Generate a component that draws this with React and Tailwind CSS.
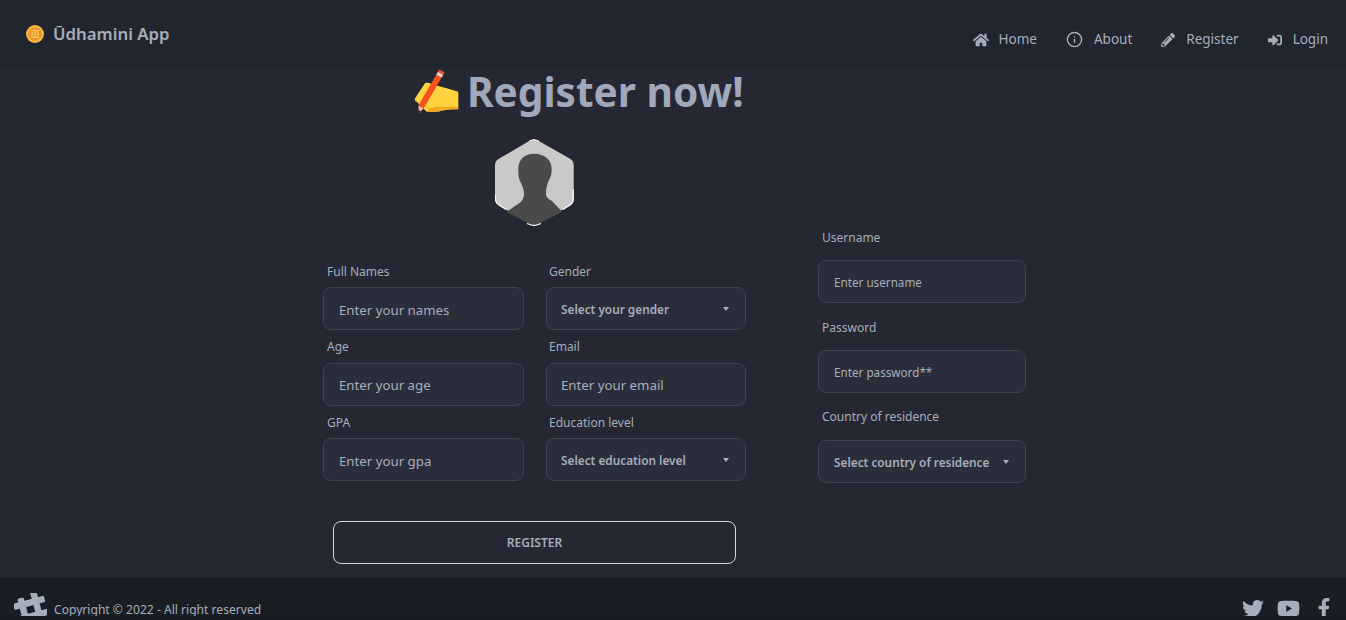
import { FaHome, FaPencilAlt, FaSignInAlt, FaTwitter, FaYoutube, FaFacebookF } from "react-icons/fa";
import { FiInfo } from "react-icons/fi";

const font = "font-['Noto_Sans','Open_Sans',sans-serif]";

function Coin() {
    return (
        <svg width="20" height="20" viewBox="0 0 20 20">
            <circle cx="10" cy="10" r="9" fill="#f6b93b" />
            <circle cx="10" cy="10" r="6.8" fill="#e8952e" />
            <path d="M6 6h8v1.2H6zM6.5 8h1.3v4.5H6.5zM9.3 8h1.4v4.5H9.3zM12.2 8h1.3v4.5h-1.3zM6 12.8h8V14H6z" fill="#f8c65a" />
        </svg>
    );
}

function WritingHand() {
    return (
        <svg width="46" height="44" viewBox="0 0 46 44">
            <path d="M1 29.3 L11 14.3 C12 13.4 14 13.6 21 16 L32.7 19.3 L44.3 22.7 L44.3 39 L21 42.7 L12.7 42.7 L7.7 37.7 L3 33 C1 32 0.4 30.6 1 29.3Z" fill="#ffd33d" />
            <path d="M21 37.7 L44.3 37.7 L44.3 40.5 L26 40.5 L25.5 42.7 L15 42.7 L14 39 L19 39Z" fill="#f6a623" />
            <path d="M4.4 36.5 L25.4 0.5 L30.6 3.5 L9.6 39.5Z" fill="#f4511e" />
            <path d="M23.9 3 L29.1 6 L27.6 8.5 L22.4 5.5Z" fill="#d9d9d9" />
            <path d="M4.4 36.5 L9.6 39.5 L5 44Z" fill="#f5b7a8" />
            <path d="M4.6 41 L6.6 42.2 L4.6 44Z" fill="#222" />
        </svg>
    );
}

function Avatar() {
    return (
        <svg width="79" height="87" viewBox="0 0 79 87">
            <path d="M35.5 1.2 Q39 -0.6 42.5 1.2 L75.5 20 Q78.7 22 78.7 26 L78.7 60 Q78.7 64 75.5 66 L42.5 85.2 Q39 87 35.5 85.2 L3.5 66 Q0 64 0 60 L0 26 Q0 22 3.5 20Z" fill="#c9c9c9" />
            <path d="M39 14.7 C50 14.7 56.7 21 56.7 30 C56.7 36 55 39 53.5 42 C52 46 51 50 51 54 C51 58 53 60 57 62 L67.3 73 L42.5 85.2 Q39 87 35.5 85.2 L11.7 73 L20 67 C26 64 29 60 29 55 C29 50 27 46 25 42 C23.5 39 23.3 35 23.3 30 C23.3 21 29 14.7 39 14.7Z" fill="#4a4a4a" />
            <path d="M0.5 56 L0.5 60 Q0.5 64 4 66 L11 70.5 M78.2 50 L78.2 60 Q78.2 64 75 66 L68 70.5 M32 84.5 L35.5 85.8 Q39 87 42.5 85.8 L46 84.5" fill="none" stroke="#fff" strokeWidth="1.2" />
            <path d="M34 2 Q39 -0.6 44 2" fill="none" stroke="#e8e8e8" strokeWidth="1" />
        </svg>
    );
}

function PuzzleLogo() {
    return (
        <svg width="33" height="30" viewBox="0 0 33 30">
            <g fill="#a6adbb" transform="rotate(-15 16 15)">
                <rect x="6" y="3" width="6.5" height="27" rx="1.5" />
                <rect x="20" y="-1" width="6.5" height="31" rx="1.5" />
                <rect x="0.5" y="6.5" width="32" height="6.5" rx="1.5" />
                <rect x="0.5" y="20" width="32" height="6.5" rx="1.5" />
            </g>
        </svg>
    );
}

function Caret() {
    return <span className="absolute right-[16px] top-1/2 -translate-y-1/2 w-0 h-0 border-x-[3.5px] border-x-transparent border-t-[4px] border-t-[#a6adbb]"></span>;
}

function Label({ text, className }) {
    return <label className={`h-[32.5px] shrink-0 flex items-center text-[12px] text-[#a6adbb] ${className}`}>{text}</label>;
}

function TextField({ label, placeholder, labelClass = "pl-1 pt-[2px]", inputClass = "pl-[15px] pt-[2px] text-[13.25px]" }) {
    return (
        <div className="flex flex-col">
            <Label text={label} className={labelClass} />
            <input
                placeholder={placeholder}
                className={`h-[43px] w-full rounded-lg border border-[#3e4350] bg-[#2a2e3a] outline-none placeholder:text-[#a6adbb] ${inputClass}`}
            />
        </div>
    );
}

function SelectField({ label, text, labelClass = "pl-[3px] pt-[2px]", boxClass = "pl-[14px] pt-[2px]" }) {
    return (
        <div className="flex flex-col">
            <Label text={label} className={labelClass} />
            <div className={`relative h-[43px] w-full rounded-lg border border-[#3e4350] bg-[#2a2e3a] flex items-center text-[11.8px] font-semibold text-[#a6adbb] ${boxClass}`}>
                {text}
                <Caret />
            </div>
        </div>
    );
}

function NavLink({ icon, label, gap }) {
    return (
        <a className={`flex items-center ${gap} text-[13.5px] text-[#a6adbb]`}>
            {icon}
            <span>{label}</span>
        </a>
    );
}

export default function App() {
    return (
        <div className={`h-screen overflow-hidden flex flex-col bg-[#252833] ${font}`}>
            <nav className="h-[67px] shrink-0 bg-[#21252e] flex justify-between">
                <div className="flex items-center gap-2 pl-[25px] pt-[1px] h-[67px]">
                    <Coin />
                    <span className="text-[16.8px] font-semibold text-[#a6adbb]">Ūdhamini App</span>
                </div>
                <div className="flex items-center gap-[29px] pr-[18px] pt-[12px]">
                    <NavLink icon={<FaHome size={16} />} label="Home" gap="gap-[10px]" />
                    <NavLink icon={<FiInfo size={17} />} label="About" gap="gap-[11px]" />
                    <NavLink icon={<FaPencilAlt size={14} />} label="Register" gap="gap-[11px]" />
                    <NavLink icon={<FaSignInAlt size={14} />} label="Login" gap="gap-[11px]" />
                </div>
            </nav>

            <main className="h-[511px] shrink-0 flex pl-[323px]">
                <section className="w-[423px]">
                    <h1 className="h-[48px] flex items-center gap-[7px] pl-[91px] text-[40.6px] font-bold text-[#a0a8ba] whitespace-nowrap">
                        <WritingHand />
                        <span className="mt-[2px]">Register now!</span>
                    </h1>
                    <div className="flex justify-center mt-[24px] pr-[1px]">
                        <Avatar />
                    </div>
                    <div className="grid grid-cols-[201px_200px] gap-x-[22px] mt-[28.5px]">
                        <TextField label="Full Names" placeholder="Enter your names" />
                        <SelectField label="Gender" text="Select your gender" />
                        <TextField label="Age" placeholder="Enter your age" />
                        <TextField label="Email" placeholder="Enter your email" labelClass="pl-[3px] pt-[2px]" inputClass="pl-[14px] pt-[2px] text-[13.25px]" />
                        <TextField label="GPA" placeholder="Enter your gpa" />
                        <SelectField label="Education level" text="Select education level" />
                    </div>
                    <button className="mt-[40px] ml-[10px] h-[43px] w-[403px] rounded-lg border border-[#d5d8df] text-[12px] font-semibold text-[#a6adbb]">REGISTER</button>
                </section>

                <section className="w-[208px] ml-[72px] pt-[155px] flex flex-col gap-[9px]">
                    <TextField label="Username" placeholder="Enter username" labelClass="pl-1 mb-[5.5px]" inputClass="pl-[15px] text-[11.7px]" />
                    <TextField label="Password" placeholder="Enter password**" labelClass="pl-1 mb-[5.5px]" inputClass="pl-[15px] text-[11.7px]" />
                    <SelectField label="Country of residence" text="Select country of residence" labelClass="pl-1 pb-[2px] mb-[5.5px]" boxClass="pl-[15px] pt-[2px]" />
                </section>
            </main>

            <footer className="h-[38px] shrink-0 overflow-hidden bg-[#191d24] flex justify-between pl-[14px] pr-[12px] text-[#a6adbb]">
                <div className="flex items-start gap-[7px] pt-[15px]">
                    <PuzzleLogo />
                    <span className="text-[12.1px] pt-[8px]">Copyright © 2022 - All right reserved</span>
                </div>
                <div className="flex items-start gap-[14px] pt-[20px]">
                    <FaTwitter size={22} className="shrink-0" />
                    <FaYoutube size={23} className="shrink-0 -mt-[1px] -ml-[1px]" />
                    <FaFacebookF size={20} className="shrink-0" />
                </div>
            </footer>
            <div className="flex-1 bg-[#171a20]"></div>
        </div>
    );
}
